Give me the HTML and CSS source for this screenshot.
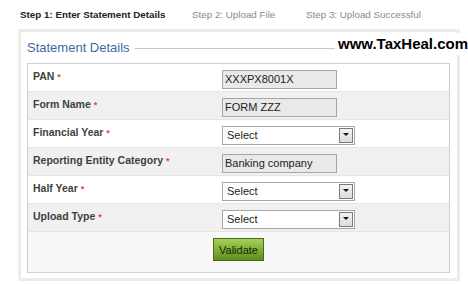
FILE: index.html
```html
<!DOCTYPE html>
<html lang="en">
<head>
  <meta charset="UTF-8">
  <title>Statement Upload</title>
  <link rel="stylesheet" href="styles.css">
</head>
<body>
  <div class="steps">
    <span class="step step-one active">Step 1: Enter Statement Details</span>
    <span class="step step-two">Step 2: Upload File</span>
    <span class="step">Step 3: Upload Successful</span>
  </div>
  <div class="panel">
    <div class="legend-row">
      <span class="legend">Statement Details</span>
      <span class="legend-line"></span>
    </div>
    <div class="watermark">www.TaxHeal.com</div>
    <div class="form-table">
      <div class="row">
        <label class="label">PAN <span class="req">*</span></label>
        <div class="field"><input class="readonly" type="text" value="XXXPX8001X" readonly></div>
      </div>
      <div class="row alt">
        <label class="label">Form Name <span class="req">*</span></label>
        <div class="field"><input class="readonly" type="text" value="FORM ZZZ" readonly></div>
      </div>
      <div class="row">
        <label class="label">Financial Year <span class="req">*</span></label>
        <div class="field">
          <div class="select"><span>Select</span><span class="arrow"></span></div>
        </div>
      </div>
      <div class="row alt">
        <label class="label">Reporting Entity Category <span class="req">*</span></label>
        <div class="field"><input class="readonly" type="text" value="Banking company" readonly></div>
      </div>
      <div class="row">
        <label class="label">Half Year <span class="req">*</span></label>
        <div class="field">
          <div class="select"><span>Select</span><span class="arrow"></span></div>
        </div>
      </div>
      <div class="row alt">
        <label class="label">Upload Type <span class="req">*</span></label>
        <div class="field">
          <div class="select"><span>Select</span><span class="arrow"></span></div>
        </div>
      </div>
      <div class="actions">
        <button class="validate">Validate</button>
      </div>
    </div>
  </div>
</body>
</html>
```

FILE: styles.css
```css
* {
  box-sizing: border-box;
}
body {
  margin: 0;
  background: #fff;
  font-family: 'Liberation Sans', Arial, sans-serif;
  font-size: 11px;
  color: #333;
}
.steps {
  display: flex;
  padding: 9px 0 0 20px;
  height: 22px;
  line-height: 12px;
  font-size: 9.8px;
  white-space: nowrap;
}
.step {
  flex-shrink: 0;
  color: #8a8a8a;
}
.step-one {
  width: 172px;
}
.step-two {
  width: 114px;
}
.step.active {
  color: #222;
  font-weight: bold;
}
.panel {
  position: relative;
  margin: 7px 0 0 18px;
  width: 442px;
  height: 252px;
  border: 3px solid #ececec;
  padding: 7px 7px 0 6px;
}
.legend-row {
  display: flex;
  align-items: center;
  height: 16px;
  margin-bottom: 8px;
}
.legend {
  font-size: 13px;
  color: #3c6ca3;
  padding-right: 5px;
}
.legend-line {
  flex: 1;
  border-top: 1px solid #c8c8c8;
  margin-top: 3px;
  margin-right: -4px;
}
.watermark {
  position: absolute;
  left: 314px;
  top: 1px;
  padding: 3px 2px 3px 3px;
  background: #fff;
  font-size: 15px;
  font-weight: bold;
  color: #000;
  line-height: 16px;
}
.form-table {
  border: 1px solid #cfcfcf;
  width: 423px;
}
.row {
  display: flex;
  align-items: center;
  height: 28px;
  border-bottom: 1px solid #e4e4e4;
}
.row.alt {
  background: #f0f0f0;
}
.label {
  width: 186px;
  padding-left: 5px;
  font-size: 10.5px;
  font-weight: bold;
  color: #3f3f3f;
  margin-top: -3px;
}
.req {
  color: #e04848;
  font-size: 9px;
}
.field {
  padding-left: 8px;
  padding-top: 3px;
}
.readonly {
  width: 115px;
  height: 19px;
  margin: 0;
  padding: 0 2px;
  border: 1px solid #a6a6a6;
  background: #e9e9e9;
  font-family: 'Liberation Sans', Arial, sans-serif;
  font-size: 11px;
  color: #222;
}
.select {
  display: flex;
  align-items: center;
  justify-content: space-between;
  width: 133px;
  height: 19px;
  border: 1px solid #a6a6a6;
  background: #fff;
  padding: 0 1px 0 4px;
  font-size: 11px;
  color: #222;
}
.arrow {
  position: relative;
  width: 14px;
  height: 15px;
  border: 1px solid #7a7a7a;
  background: linear-gradient(#f2f2f2, #dcdcdc);
}
.arrow::after {
  content: '';
  position: absolute;
  left: 3px;
  top: 4px;
  border-left: 3px solid transparent;
  border-right: 3px solid transparent;
  border-top: 3px solid #111;
}
.actions {
  height: 40px;
  padding: 6px 0 0 185px;
  background: #f8f8f8;
}
.validate {
  width: 51px;
  height: 23px;
  margin: 0;
  padding: 0;
  border: 1px solid #456d12;
  background: linear-gradient(#a6d059, #5f8e1f);
  font-family: 'Liberation Sans', Arial, sans-serif;
  font-size: 11px;
  color: #142600;
  cursor: pointer;
}
```
